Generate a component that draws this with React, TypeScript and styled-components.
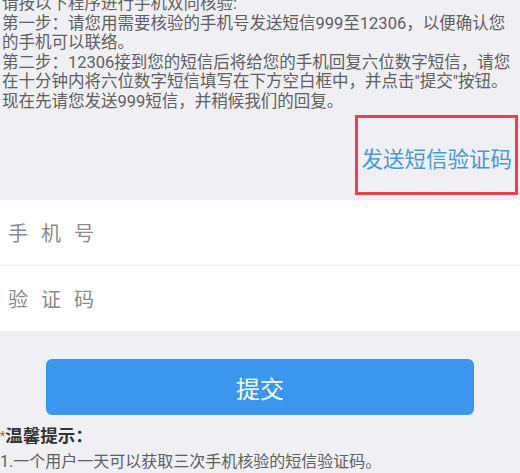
import React from 'react';
import styled, { createGlobalStyle } from 'styled-components';

const GlobalStyle = createGlobalStyle`
  html, body {
    margin: 0;
    padding: 0;
    background: #efeff4;
    overflow: hidden;
  }
  body {
    font-family: Roboto, "Noto Sans CJK SC", sans-serif;
  }
`;

const introLines = [
  '请按以下程序进行手机双向核验:',
  '第一步：请您用需要核验的手机号发送短信999至12306，以便确认您',
  '的手机可以联络。',
  '第二步：12306接到您的短信后将给您的手机回复六位数字短信，请您',
  '在十分钟内将六位数字短信填写在下方空白框中，并点击"提交"按钮。',
  '现在先请您发送999短信，并稍候我们的回复。',
];

export default function App() {
  return (
    <>
      <GlobalStyle />
      <Page>
        <Intro>
          {introLines.map((line) => (
            <Line key={line}>{line}</Line>
          ))}
        </Intro>

        <LinkRow>
          <SendLink>发送短信验证码</SendLink>
        </LinkRow>

        <Form>
          <Field>
            <Label>手机号</Label>
          </Field>
          <Field>
            <Label>验证码</Label>
          </Field>
        </Form>

        <SubmitButton>提交</SubmitButton>

        <Tips>
          <TipsTitle>
            <Star>*</Star>温馨提示：
          </TipsTitle>
          <TipLine>1.一个用户一天可以获取三次手机核验的短信验证码。</TipLine>
        </Tips>
      </Page>
    </>
  );
}

const Page = styled.div`
  width: 520px;
  height: 473px;
  overflow: hidden;
  display: flex;
  flex-direction: column;
`;

const Intro = styled.div`
  margin-top: -6px;
  padding: 0 2px;
  color: #606060;
  font-size: 16.5px;
  line-height: 19.5px;
`;

const Line = styled.div`
  white-space: nowrap;
`;

const LinkRow = styled.div`
  display: flex;
  justify-content: flex-end;
  margin-top: 4px;
  padding-right: 2px;
`;

const SendLink = styled.div`
  box-sizing: border-box;
  width: 163px;
  height: 80px;
  border: 3.5px solid #e6434c;
  display: flex;
  align-items: center;
  justify-content: flex-end;
  padding: 4px 3px 0 0;
  color: #4a98d6;
  font-size: 21.5px;
  white-space: nowrap;
`;

const Form = styled.div`
  margin-top: 5px;
  background: #fff;
  display: flex;
  flex-direction: column;
`;

const Field = styled.div`
  height: 65px;
  display: flex;
  align-items: center;
  padding-left: 8px;
  & + & {
    border-top: 1px solid #ececec;
  }
`;

const Label = styled.span`
  color: #8a8a8a;
  font-size: 20px;
  letter-spacing: 13px;
`;

const SubmitButton = styled.button`
  margin: 28px auto 0;
  width: 428px;
  height: 56px;
  border: none;
  border-radius: 6px;
  background: #3b97ee;
  color: #fff;
  font-family: inherit;
  font-size: 24px;
  flex-shrink: 0;
`;

const Tips = styled.div`
  margin-top: 8px;
  color: #333;
`;

const TipsTitle = styled.div`
  font-size: 17.5px;
  font-weight: bold;
  line-height: 26px;
`;

const Star = styled.span`
  color: #e23b3b;
  font-size: 12px;
  font-weight: normal;
  vertical-align: top;
`;

const TipLine = styled.div`
  font-size: 16px;
  line-height: 26px;
  color: #606060;
  white-space: nowrap;
`;
